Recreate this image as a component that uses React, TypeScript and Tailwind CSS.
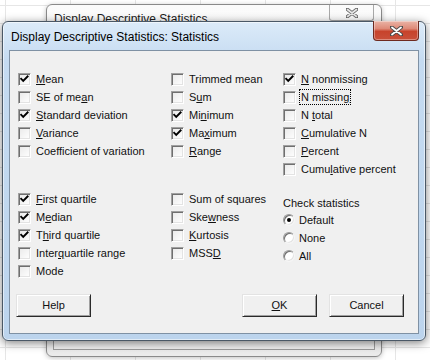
import type { ReactNode } from "react";

const ui = "font-['Liberation_Sans',Arial,sans-serif]";

function CheckBox({ checked }: { checked?: boolean }) {
  return (
    <span className="relative flex h-[13px] w-[13px] shrink-0 items-center justify-center border border-t-[#a0a0a0] border-l-[#a0a0a0] border-r-white border-b-white bg-[linear-gradient(135deg,#e9e9e9,#ffffff)] shadow-[inset_1px_1px_#6f6f6f,inset_-1px_-1px_#e3e3e3]">
      {checked && (
        <svg width="11" height="11" viewBox="0 0 11 11" className="absolute left-0 top-0">
          <polyline points="2.2,4.8 4.2,6.8 8.6,2.4" fill="none" stroke="#000" strokeWidth="1.9" strokeLinecap="square" />
        </svg>
      )}
    </span>
  );
}

function Radio({ checked }: { checked?: boolean }) {
  return (
    <span className="flex h-[12px] w-[12px] shrink-0 items-center justify-center rounded-full border border-t-[#9a9a9a] border-l-[#9a9a9a] border-r-[#f4f4f4] border-b-[#f4f4f4] bg-white shadow-[inset_1px_1px_#6f6f6f,inset_-1px_-1px_#e3e3e3]">
      {checked && <span className="h-[4px] w-[4px] rounded-full bg-black" />}
    </span>
  );
}

function Item({ checked, focus, children }: { checked?: boolean; focus?: boolean; children: ReactNode }) {
  return (
    <div className="flex h-[18px] items-center gap-[5px]">
      <CheckBox checked={checked} />
      {focus ? (
        <span className="-ml-[2px] border border-dotted border-black px-[1px] leading-[14px]">{children}</span>
      ) : (
        <span className="whitespace-nowrap leading-[14px]">{children}</span>
      )}
    </div>
  );
}

function RadioItem({ checked, children }: { checked?: boolean; children: ReactNode }) {
  return (
    <div className="flex h-[18px] items-center gap-[4px]">
      <Radio checked={checked} />
      <span className="leading-[14px]">{children}</span>
    </div>
  );
}

function Button({ children }: { children: ReactNode }) {
  return (
    <button className="flex h-[23px] w-[75px] items-center justify-center border border-t-[#e3e3e3] border-l-[#e3e3e3] border-r-[#2a2a2a] border-b-[#2a2a2a] bg-[#f0f0f0] shadow-[inset_1px_1px_#ffffff,inset_-1px_-1px_#a0a0a0]">
      {children}
    </button>
  );
}

export default function App() {
  return (
    <div
      className={`relative h-[360px] w-[430px] overflow-hidden bg-white bg-[linear-gradient(#e6e6e6_1px,transparent_1px),linear-gradient(90deg,#e6e6e6_1px,transparent_1px)] bg-[size:65px_18px] bg-[position:5px_5px] ${ui}`}
    >
      {/* window behind */}
      <div className="absolute left-[46px] top-[4px] flex h-[353px] w-[336px] flex-col rounded-[6px] border border-[#8a8a8a] bg-[linear-gradient(180deg,#fbfbfb,#ebebeb)] shadow-[0_1px_5px_rgba(0,0,0,0.25)]">
        <div className="relative flex h-[28px] items-center pl-[7px] text-[12px] text-[#1b1b1b]">
          Display Descriptive Statistics
          <div className="absolute right-[7px] top-0 flex h-[16px] w-[45px] items-center justify-center border-x border-b border-[#a9a9a9] rounded-b-[3px]">
            <svg width="12" height="10" viewBox="0 0 12 10">
              <path d="M1 1 L11 9 M11 1 L1 9" stroke="#6a6a6a" strokeWidth="3.4" strokeLinecap="round" />
              <path d="M1.5 1.5 L10.5 8.5 M10.5 1.5 L1.5 8.5" stroke="#e8e8e8" strokeWidth="1.6" strokeLinecap="round" />
            </svg>
          </div>
        </div>
        <div className="mx-[6px] mb-[6px] flex-1 border border-[#9c9c9c] bg-[#f0f0f0]" />
      </div>

      {/* active dialog */}
      <div className="absolute left-[2px] top-[21px] flex h-[320px] w-[424px] flex-col rounded-[6px] border border-[#4a5866] bg-[linear-gradient(180deg,#dcebf9_0%,#c5dbf1_12%,#bcd4ed_100%)] shadow-[0_2px_10px_rgba(0,0,0,0.5),inset_0_0_0_1px_rgba(255,255,255,0.55)]">
        <div className="relative flex h-[28px] items-center pl-[8px] pt-[1px] text-[12px] text-black">
          Display Descriptive Statistics: Statistics
          <div className="absolute right-[6px] top-[-1px] flex h-[20px] w-[46px] items-center justify-center rounded-b-[4px] border border-t-0 border-[#6e2a20] bg-[linear-gradient(180deg,#eab4a6_0%,#de8a78_40%,#c7432c_55%,#c9503a_100%)] shadow-[inset_0_0_0_1px_rgba(255,255,255,0.35)]">
            <svg width="13" height="10" viewBox="0 0 13 10">
              <path d="M1.5 1 L11.5 9 M11.5 1 L1.5 9" stroke="#4a4a4a" strokeWidth="3.6" strokeLinecap="round" />
              <path d="M2 1.5 L11 8.5 M11 1.5 L2 8.5" stroke="#ffffff" strokeWidth="1.8" strokeLinecap="round" />
            </svg>
          </div>
        </div>

        <div className="mx-[6px] mb-[6px] flex flex-1 flex-col border border-[#7f91a4] bg-[#f0f0f0] pl-[8px] pt-[19px] text-[11px] text-[#111]">
          <div className="grid grid-cols-[153px_112px_1fr]">
            <div className="flex flex-col">
              <Item checked><u>M</u>ean</Item>
              <Item>SE of me<u>a</u>n</Item>
              <Item checked><u>S</u>tandard deviation</Item>
              <Item><u>V</u>ariance</Item>
              <Item>Coefficient of variation</Item>
            </div>
            <div className="flex flex-col">
              <Item>Trimmed mean</Item>
              <Item>S<u>u</u>m</Item>
              <Item checked>Mi<u>n</u>imum</Item>
              <Item checked>Ma<u>x</u>imum</Item>
              <Item><u>R</u>ange</Item>
            </div>
            <div className="flex flex-col">
              <Item checked><u>N</u> nonmissing</Item>
              <Item focus>N missin<u>g</u></Item>
              <Item>N <u>t</u>otal</Item>
              <Item><u>C</u>umulative N</Item>
              <Item><u>P</u>ercent</Item>
              <Item>Cumu<u>l</u>ative percent</Item>
            </div>
          </div>

          <div className="mt-[12px] grid grid-cols-[153px_112px_1fr]">
            <div className="flex flex-col">
              <Item checked><u>F</u>irst quartile</Item>
              <Item checked>M<u>e</u>dian</Item>
              <Item checked>T<u>h</u>ird quartile</Item>
              <Item>Inter<u>q</u>uartile range</Item>
              <Item>Mode</Item>
            </div>
            <div className="flex flex-col">
              <Item>Sum of squares</Item>
              <Item>Ske<u>w</u>ness</Item>
              <Item><u>K</u>urtosis</Item>
              <Item>MSS<u>D</u></Item>
            </div>
            <div className="flex flex-col pt-[4px]">
              <div className="flex h-[17px] items-center leading-[14px]">Check statistics</div>
              <RadioItem checked>Default</RadioItem>
              <RadioItem>None</RadioItem>
              <RadioItem>All</RadioItem>
            </div>
          </div>

          <div className="mt-[14px] flex items-center pr-[14px]">
            <div className="-ml-[2px]">
              <Button>Help</Button>
            </div>
            <div className="flex-1" />
            <div className="flex gap-[12px]">
              <Button><u>O</u>K</Button>
              <Button>Cancel</Button>
            </div>
          </div>
        </div>
      </div>
    </div>
  );
}
